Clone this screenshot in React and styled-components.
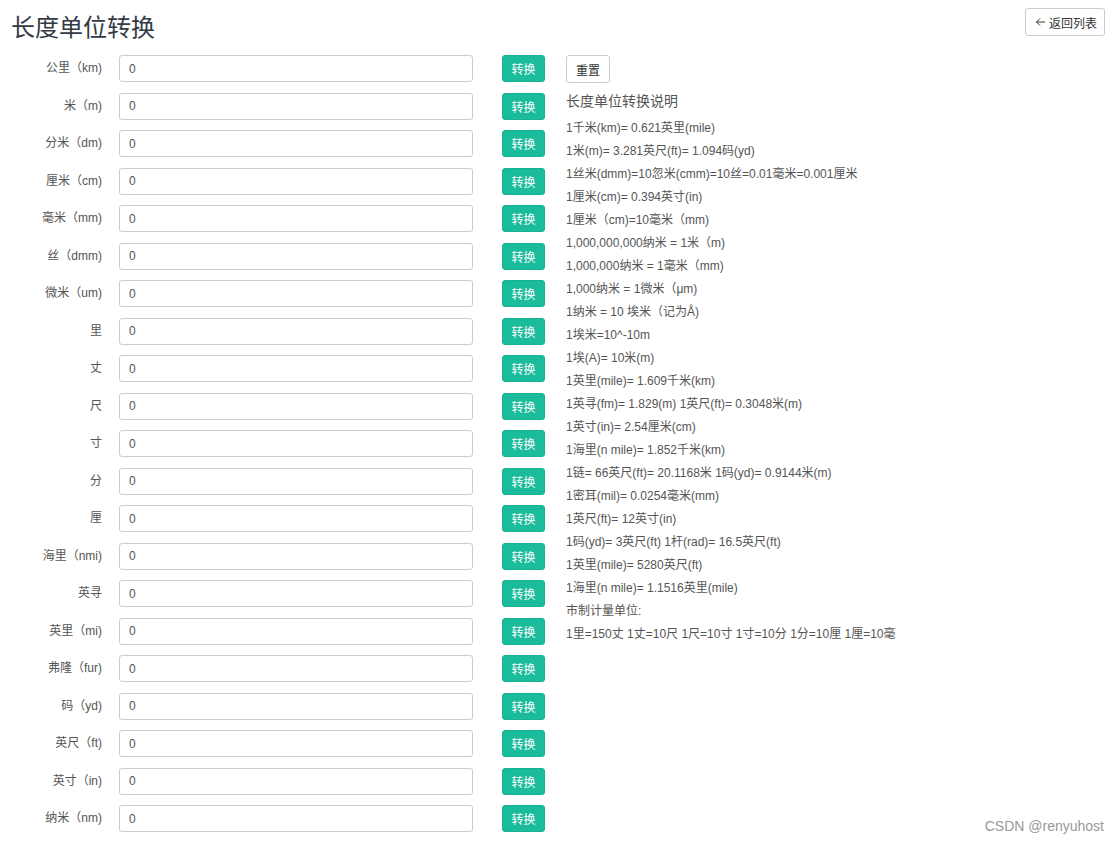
import React from "react";
import styled, { createGlobalStyle } from "styled-components";

const Global = createGlobalStyle`
  html, body { margin: 0; padding: 0; background: #fff; }
  body { font-family: "Liberation Sans", Arial, "Noto Sans CJK SC", sans-serif; color: #555; }
  * { box-sizing: border-box; }
`;

const Page = styled.div`
  width: 1119px;
  height: 844px;
  position: relative;
  overflow: hidden;
`;

const Header = styled.header`
  display: flex;
  justify-content: space-between;
  align-items: flex-start;
  padding: 8px 14px 0 11px;
  height: 55px;
`;

const Title = styled.h1`
  margin: 3px 0 0;
  font-size: 24px;
  font-weight: 400;
  line-height: 30px;
  color: #333a44;
  font-family: "Noto Sans CJK SC", sans-serif;
`;

const BackButton = styled.button`
  display: flex;
  align-items: center;
  gap: 3px;
  height: 28px;
  width: 80px;
  padding: 0 0 0 9px;
  border: 1px solid #ccc;
  border-radius: 3px;
  background: #fff;
  color: #333;
  font-size: 12px;
  font-family: "Noto Sans CJK SC", sans-serif;
`;

const Main = styled.div`
  display: flex;
  align-items: flex-start;
`;

const Form = styled.div`
  display: flex;
  flex-direction: column;
  width: 545px;
`;

const Row = styled.div`
  display: grid;
  grid-template-columns: 102px 354px 43px;
  column-gap: 17px;
  align-items: center;
  height: 37.5px;
  align-content: start;

  & > button { margin-left: 12px; }
`;

const Label = styled.label`
  text-align: right;
  font-size: 12px;
  color: #555;
  font-family: "Liberation Sans", "Noto Sans CJK SC", sans-serif;
  line-height: 27px;
`;

const Input = styled.input`
  height: 27px;
  width: 354px;
  border: 1px solid #ccc;
  border-radius: 3px;
  padding: 0 9px;
  font-size: 12px;
  color: #555;
  font-family: "Liberation Sans", sans-serif;
  outline: none;
`;

const ConvertButton = styled.button`
  width: 43px;
  height: 27px;
  border: 1px solid #18b394;
  border-radius: 3px;
  background: #1abc9c;
  color: #fff;
  font-size: 12px;
  padding: 0;
  font-family: "Noto Sans CJK SC", sans-serif;
`;

const Side = styled.aside`
  margin-left: 21px;
  display: flex;
  flex-direction: column;
  align-items: flex-start;
`;

const ResetButton = styled.button`
  width: 44px;
  height: 28px;
  border: 1px solid #ccc;
  border-radius: 3px;
  background: #fff;
  color: #333;
  font-size: 12px;
  padding: 0;
  font-family: "Noto Sans CJK SC", sans-serif;
`;

const DescTitle = styled.h3`
  margin: 7px 0 7px;
  font-size: 14px;
  font-weight: 400;
  line-height: 20px;
  color: #555;
  font-family: "Noto Sans CJK SC", sans-serif;
`;

const Line = styled.p`
  margin: 0;
  font-size: 12px;
  line-height: 23px;
  color: #555;
  white-space: nowrap;
  font-family: "Liberation Sans", "Noto Sans CJK SC", sans-serif;
`;

const Watermark = styled.div`
  position: absolute;
  right: 15px;
  bottom: 10px;
  font-size: 14px;
  color: #999;
  font-family: "Liberation Sans", sans-serif;
`;

const units = [
  "公里（km)", "米（m)", "分米（dm)", "厘米（cm)", "毫米（mm)", "丝（dmm)",
  "微米（um)", "里", "丈", "尺", "寸", "分", "厘", "海里（nmi)", "英寻",
  "英里（mi)", "弗隆（fur)", "码（yd)", "英尺（ft)", "英寸（in)", "纳米（nm)",
];

const lines = [
  "1千米(km)= 0.621英里(mile)",
  "1米(m)= 3.281英尺(ft)= 1.094码(yd)",
  "1丝米(dmm)=10忽米(cmm)=10丝=0.01毫米=0.001厘米",
  "1厘米(cm)= 0.394英寸(in)",
  "1厘米（cm)=10毫米（mm)",
  "1,000,000,000纳米 = 1米（m)",
  "1,000,000纳米 = 1毫米（mm)",
  "1,000纳米 = 1微米（μm)",
  "1纳米 = 10 埃米（记为Å)",
  "1埃米=10^-10m",
  "1埃(A)= 10米(m)",
  "1英里(mile)= 1.609千米(km)",
  "1英寻(fm)= 1.829(m) 1英尺(ft)= 0.3048米(m)",
  "1英寸(in)= 2.54厘米(cm)",
  "1海里(n mile)= 1.852千米(km)",
  "1链= 66英尺(ft)= 20.1168米 1码(yd)= 0.9144米(m)",
  "1密耳(mil)= 0.0254毫米(mm)",
  "1英尺(ft)= 12英寸(in)",
  "1码(yd)= 3英尺(ft) 1杆(rad)= 16.5英尺(ft)",
  "1英里(mile)= 5280英尺(ft)",
  "1海里(n mile)= 1.1516英里(mile)",
  "市制计量单位:",
  "1里=150丈 1丈=10尺 1尺=10寸 1寸=10分 1分=10厘 1厘=10毫",
];

export default function App() {
  return (
    <Page>
      <Global />
      <Header>
        <Title>长度单位转换</Title>
        <BackButton>
          <svg width="11" height="10" viewBox="0 0 11 10" fill="none" stroke="#333" strokeWidth="1">
            <path d="M10 5H1.5M5 1.5L1.5 5L5 8.5" />
          </svg>
          返回列表
        </BackButton>
      </Header>
      <Main>
        <Form>
          {units.map((u) => (
            <Row key={u}>
              <Label>{u}</Label>
              <Input defaultValue="0" />
              <ConvertButton>转换</ConvertButton>
            </Row>
          ))}
        </Form>
        <Side>
          <ResetButton>重置</ResetButton>
          <DescTitle>长度单位转换说明</DescTitle>
          {lines.map((l) => (
            <Line key={l}>{l}</Line>
          ))}
        </Side>
      </Main>
      <Watermark>CSDN @renyuhost</Watermark>
    </Page>
  );
}
